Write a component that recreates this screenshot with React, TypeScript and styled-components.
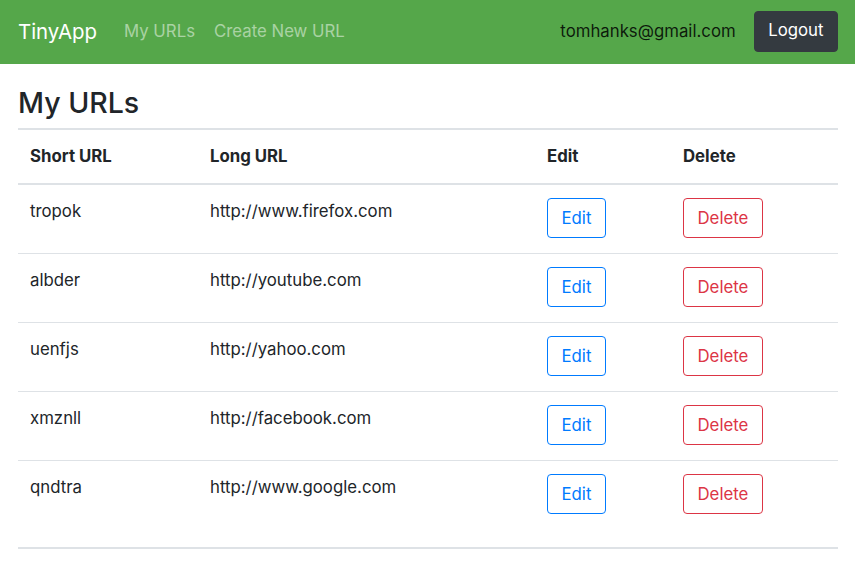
import React from "react";
import styled, { createGlobalStyle } from "styled-components";

const GlobalStyle = createGlobalStyle`
  html, body { margin: 0; padding: 0; background: #fff; }
  body {
    font-family: Inter, "Helvetica Neue", Arial, sans-serif;
    color: #212529;
    font-size: 16.8px;
    line-height: 1.5;
  }
  * { box-sizing: border-box; }
`;

const NavBar = styled.nav`
  display: flex;
  align-items: center;
  height: 64px;
  padding: 0 17px 0 18px;
  background: #55a74a;
`;

const Brand = styled.a`
  font-size: 20.4px;
  color: #fff;
  text-decoration: none;
  margin-right: 27px;
  line-height: 1.5;
`;

const NavLinks = styled.div`
  display: flex;
  gap: 19px;
  flex: 1;
`;

const NavLink = styled.a`
  color: rgba(255, 255, 255, 0.5);
  font-size: 16.8px;
  text-decoration: none;
`;

const UserEmail = styled.span`
  color: rgba(0, 0, 0, 0.85);
  font-size: 16.8px;
  margin-right: 18px;
`;

const DarkButton = styled.button`
  font-family: inherit;
  font-size: 16.8px;
  line-height: 1.5;
  color: #fff;
  background: #343a40;
  border: 1px solid #343a40;
  border-radius: 4px;
  padding: 0 13.5px;
  height: 41px;
  margin-top: -2px;
`;

const Container = styled.main`
  padding: 0 17px 0 18px;
`;

const Heading = styled.h2`
  margin: 22px 0 8px;
  font-size: 28.5px;
  font-weight: 500;
  line-height: 1.2;
  color: #212529;
`;

const Table = styled.table`
  width: 100%;
  border-collapse: collapse;
  table-layout: fixed;
  border-top: 2px solid #dee2e6;
`;

const HeadCell = styled.th`
  text-align: left;
  font-weight: 700;
  padding: 14px 12px 14px;
  line-height: 25px;
  border-bottom: 2px solid #dee2e6;
  vertical-align: top;
`;

const Row = styled.tr`
  border-top: 1px solid #dee2e6;
  &:first-child { border-top: none; }
`;

const Cell = styled.td`
  padding: 13px 12px 15px;
  vertical-align: top;
  line-height: 26px;
`;

const FootRow = styled.tr`
  border-bottom: 2px solid #dee2e6;
  height: 19px;
`;

const OutlineButton = styled.button<{ $tone: string }>`
  font-family: inherit;
  font-size: 16.8px;
  line-height: 1.5;
  height: 40px;
  padding: 0 13.5px;
  background: #fff;
  color: ${(p) => p.$tone};
  border: 1px solid ${(p) => p.$tone};
  border-radius: 4px;
  cursor: pointer;
  vertical-align: top;
`;

const urls = [
  ["tropok", "http://www.firefox.com"],
  ["albder", "http://youtube.com"],
  ["uenfjs", "http://yahoo.com"],
  ["xmznll", "http://facebook.com"],
  ["qndtra", "http://www.google.com"],
];

export default function App() {
  return (
    <>
      <GlobalStyle />
      <NavBar>
        <Brand href="#">TinyApp</Brand>
        <NavLinks>
          <NavLink href="#">My URLs</NavLink>
          <NavLink href="#">Create New URL</NavLink>
        </NavLinks>
        <UserEmail>tomhanks@gmail.com</UserEmail>
        <DarkButton>Logout</DarkButton>
      </NavBar>
      <Container>
        <Heading>My URLs</Heading>
        <Table>
          <colgroup>
            <col style={{ width: 180 }} />
            <col style={{ width: 337 }} />
            <col style={{ width: 136 }} />
            <col />
          </colgroup>
          <thead>
            <tr>
              <HeadCell>Short URL</HeadCell>
              <HeadCell>Long URL</HeadCell>
              <HeadCell>Edit</HeadCell>
              <HeadCell>Delete</HeadCell>
            </tr>
          </thead>
          <tbody>
            {urls.map(([s, l]) => (
              <Row key={s}>
                <Cell>{s}</Cell>
                <Cell>{l}</Cell>
                <Cell>
                  <OutlineButton $tone="#007bff">Edit</OutlineButton>
                </Cell>
                <Cell>
                  <OutlineButton $tone="#dc3545">Delete</OutlineButton>
                </Cell>
              </Row>
            ))}
          </tbody>
          <tfoot>
            <FootRow>
              <td colSpan={4} />
            </FootRow>
          </tfoot>
        </Table>
      </Container>
    </>
  );
}
